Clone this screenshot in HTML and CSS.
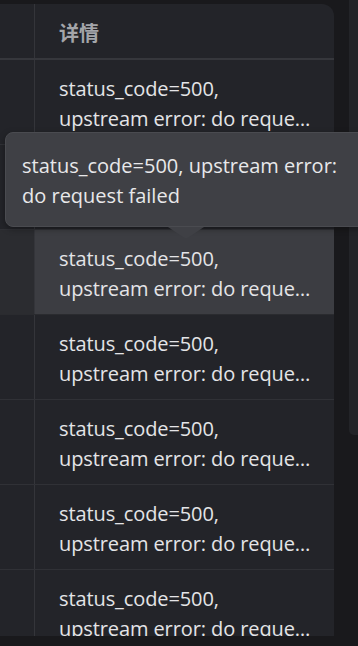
FILE: index.html
```html
<!DOCTYPE html>
<html lang="zh">
<head>
<meta charset="utf-8">
<link rel="stylesheet" href="styles.css">
</head>
<body>
<div class="page">
  <div class="card">
    <div class="row head">
      <div class="c1"></div>
      <div class="c2"><span class="htxt">详情</span></div>
    </div>
    <div class="row"><div class="c1"></div><div class="c2"><div class="ln">status_code=500,</div><div class="ln cut">upstream error: do request failed</div></div></div>
    <div class="row"><div class="c1"></div><div class="c2"><div class="ln">status_code=500,</div><div class="ln cut">upstream error: do request failed</div></div></div>
    <div class="row hover"><div class="c1"></div><div class="c2"><div class="ln">status_code=500,</div><div class="ln cut">upstream error: do request failed</div></div></div>
    <div class="row"><div class="c1"></div><div class="c2"><div class="ln">status_code=500,</div><div class="ln cut">upstream error: do request failed</div></div></div>
    <div class="row"><div class="c1"></div><div class="c2"><div class="ln">status_code=500,</div><div class="ln cut">upstream error: do request failed</div></div></div>
    <div class="row"><div class="c1"></div><div class="c2"><div class="ln">status_code=500,</div><div class="ln cut">upstream error: do request failed</div></div></div>
    <div class="row"><div class="c1"></div><div class="c2"><div class="ln">status_code=500,</div><div class="ln cut">upstream error: do request failed</div></div></div>
  </div>
  <div class="scrollbar"></div>
</div>
<div class="tooltip">
  <div class="tip-text">status_code=500, upstream error: do request failed</div>
  <svg class="arrow" width="36" height="12" viewBox="0 0 36 12"><path d="M0 0 L36 0 L20.6 10.2 Q18 12 15.4 10.2 Z" fill="#3f4045"/></svg>
</div>
</body>
</html>
```
FILE: styles.css
```css
html,body{margin:0;padding:0}
body{
  background:#19191c;
  width:358px;height:646px;overflow:hidden;position:relative;
  font-family:"Open Sans","Noto Sans CJK SC",sans-serif;
  color:#e4e4e7;
}
.page{display:flex;align-items:flex-start}
.card{
  width:334px;height:632px;margin-top:4px;
  background:#232429;
  border-top-right-radius:12px;
  overflow:hidden;
  flex:none;
}
.scrollbar{
  width:9px;height:435px;margin-left:15px;
  background:#232428;
  border-bottom-left-radius:5px;
  flex:none;
}
.row{display:flex;border-bottom:1px solid #303136}
.row.head{height:54px;border-bottom:2px solid #36373c}
.c1{width:34px;border-right:1px solid #34353a;flex:none}
.c2{flex:1;min-width:0;padding:14px 20px 10px 24px}
.head .c2{padding:0 24px;display:flex;align-items:center}
.htxt{
  font-family:"Noto Sans CJK SC",sans-serif;
  font-weight:700;font-size:20px;color:#a4a5a9;
  line-height:1;position:relative;top:2px;
}
.ln{font-size:20px;line-height:30px;white-space:nowrap;letter-spacing:-0.1px}
.ln.cut{overflow:hidden;text-overflow:ellipsis}
.row.hover{background:#2b2c30;border-bottom-color:#2a2b2f}
.row.hover .c2{background:#3c3d42}
.tooltip{
  position:absolute;left:5px;top:132px;
  width:330px;padding:18px 16px 15px 16px;
  background:#3f4045;
  border:1px solid #4a4b50;
  border-radius:8px;
  box-shadow:0 2px 6px rgba(0,0,0,.35);
  color:#e8e8ea;
}
.tip-text{font-size:20px;line-height:30px}
.arrow{position:absolute;left:162px;top:94px;display:block}
```
